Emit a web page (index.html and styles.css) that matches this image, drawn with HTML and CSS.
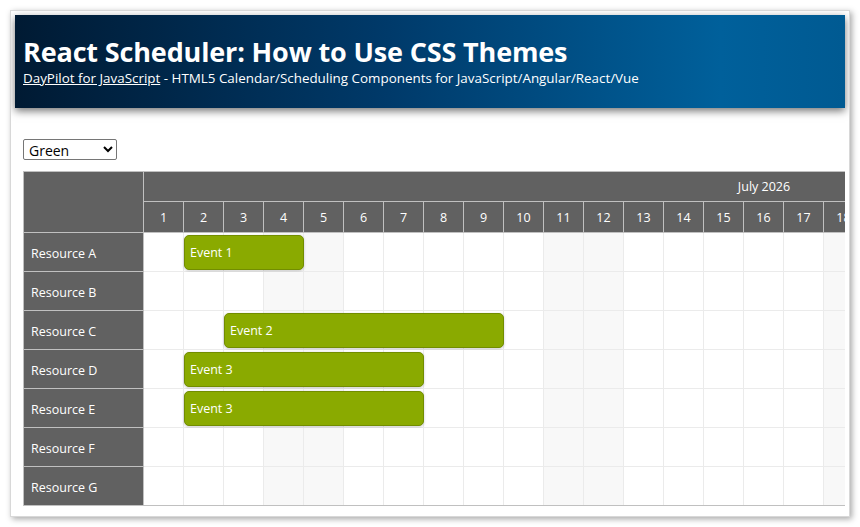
FILE: index.html
```html
<!DOCTYPE html>
<html>
<head>
<meta charset="utf-8">
<link rel="stylesheet" href="styles.css">
</head>
<body>
<div class="frame">
  <div class="panel">
    <div class="header">
      <h1 class="title">React Scheduler: How to Use CSS Themes</h1>
      <div class="subtitle"><a href="#">DayPilot for JavaScript</a> - HTML5 Calendar/Scheduling Components for JavaScript/Angular/React/Vue</div>
    </div>
    <div class="main">
      <div class="toolbar">
        <select class="theme-select"><option>Green</option></select>
      </div>
      <div class="scheduler">
        <div class="rowheaders">
          <div class="corner"></div>
          <div class="rh">Resource A</div>
          <div class="rh">Resource B</div>
          <div class="rh">Resource C</div>
          <div class="rh">Resource D</div>
          <div class="rh">Resource E</div>
          <div class="rh">Resource F</div>
          <div class="rh">Resource G</div>
        </div>
        <div class="viewport">
          <div class="timeline" id="timeline">
            <div class="month">July 2026</div>
            <div class="days" id="days"></div>
            <div class="rows" id="rows"></div>
          </div>
        </div>
      </div>
    </div>
  </div>
</div>
<script src="app.js"></script>
</body>
</html>
```

FILE: styles.css
```css
html, body {
  margin: 0;
  padding: 0;
  background: #ffffff;
}
body {
  font-family: "Open Sans", "Noto Sans", sans-serif;
  min-height: 527px;
}
.frame {
  padding: 10px;
}
.panel {
  background: #fff;
  border: 1px solid #d8d8d8;
  box-shadow: 2px 2px 6px rgba(0,0,0,0.35);
  padding: 4px;
  height: 507px;
  box-sizing: border-box;
  overflow: hidden;
}
.header {
  height: 93px;
  box-sizing: border-box;
  padding: 21px 8px 0 8px;
  background: linear-gradient(to right, #001a33 0%, #003a6a 45%, #00609b 85%, #005a92 100%);
  color: #fff;
  box-shadow: 0 3px 8px rgba(0,0,0,0.55);
  position: relative;
}
.title {
  margin: 0;
  font-size: 27px;
  font-weight: 700;
  line-height: 32px;
  letter-spacing: -0.15px;
}
.subtitle {
  font-size: 13.4px;
  line-height: 21px;
  margin-top: 0;
}
.subtitle a {
  color: #fff;
  text-decoration: underline;
}
.main {
  padding: 31px 0 0 8px;
}
.toolbar {
  height: 32px;
}
.theme-select {
  display: block;
  width: 94px;
  height: 21px;
  font-family: "Open Sans", "Noto Sans", sans-serif;
  font-size: 14px;
  border: 1px solid #767676;
  border-radius: 2px;
  background: #fff;
  color: #000;
  padding: 0 1px;
}
.scheduler {
  display: flex;
  border-top: 1px solid #c0c0c0;
  border-bottom: 1px solid #c0c0c0;
  border-left: 1px solid #c0c0c0;
  font-size: 12.5px;
  color: #fff;
  overflow: hidden;
}
.rowheaders {
  width: 119px;
  flex: none;
  background: #616161;
  border-right: 1px solid #c0c0c0;
}
.corner {
  height: 60px;
  border-bottom: 1px solid #c0c0c0;
}
.rh {
  height: 38px;
  line-height: 41px;
  padding-left: 7px;
  border-bottom: 1px solid #c0c0c0;
}
.rh:last-child {
  border-bottom: none;
}
.viewport {
  flex: 1;
  overflow: hidden;
}
.timeline {
  width: 1240px;
}
.month {
  height: 29px;
  line-height: 30px;
  background: #616161;
  text-align: center;
  border-bottom: 1px solid #c0c0c0;
}
.days {
  display: flex;
  background: #616161;
  border-bottom: 1px solid #c0c0c0;
}
.day {
  width: 39px;
  height: 30px;
  line-height: 31px;
  text-align: center;
  border-right: 1px solid #c0c0c0;
  flex: none;
}
.row {
  display: flex;
  position: relative;
  border-bottom: 1px solid #ebebeb;
}
.row:last-child {
  border-bottom: none;
}
.cell {
  width: 39px;
  height: 38px;
  border-right: 1px solid #ebebeb;
  background: #fff;
  flex: none;
}
.cell.weekend {
  background: #f8f8f8;
}
.event {
  position: absolute;
  top: 2px;
  height: 35px;
  box-sizing: border-box;
  background: #8aaa00;
  border: 1px solid #728d00;
  border-radius: 5px;
  box-shadow: 0 1px 3px rgba(0,0,0,0.2);
  color: #fff;
  font-size: 12.5px;
  line-height: 34px;
  padding-left: 5px;
  white-space: nowrap;
}
```

FILE: app.js
```js
(function () {
  var days = document.getElementById('days');
  var rows = document.getElementById('rows');
  var weekend = function (d) {
    // July 1, 2026 is a Wednesday
    var dow = (3 + d - 1) % 7;
    return dow === 6 || dow === 0;
  };
  for (var d = 1; d <= 31; d++) {
    var el = document.createElement('div');
    el.className = 'day';
    el.textContent = d;
    days.appendChild(el);
  }
  var events = {
    0: [{ text: 'Event 1', start: 2, len: 3 }],
    2: [{ text: 'Event 2', start: 3, len: 7 }],
    3: [{ text: 'Event 3', start: 2, len: 6 }],
    4: [{ text: 'Event 3', start: 2, len: 6 }]
  };
  for (var r = 0; r < 7; r++) {
    var row = document.createElement('div');
    row.className = 'row';
    for (var c = 1; c <= 31; c++) {
      var cell = document.createElement('div');
      cell.className = 'cell' + (weekend(c) ? ' weekend' : '');
      row.appendChild(cell);
    }
    (events[r] || []).forEach(function (ev) {
      var e = document.createElement('div');
      e.className = 'event';
      e.textContent = ev.text;
      e.style.left = ((ev.start - 1) * 40) + 'px';
      e.style.width = (ev.len * 40) + 'px';
      row.appendChild(e);
    });
    rows.appendChild(row);
  }
})();
```
